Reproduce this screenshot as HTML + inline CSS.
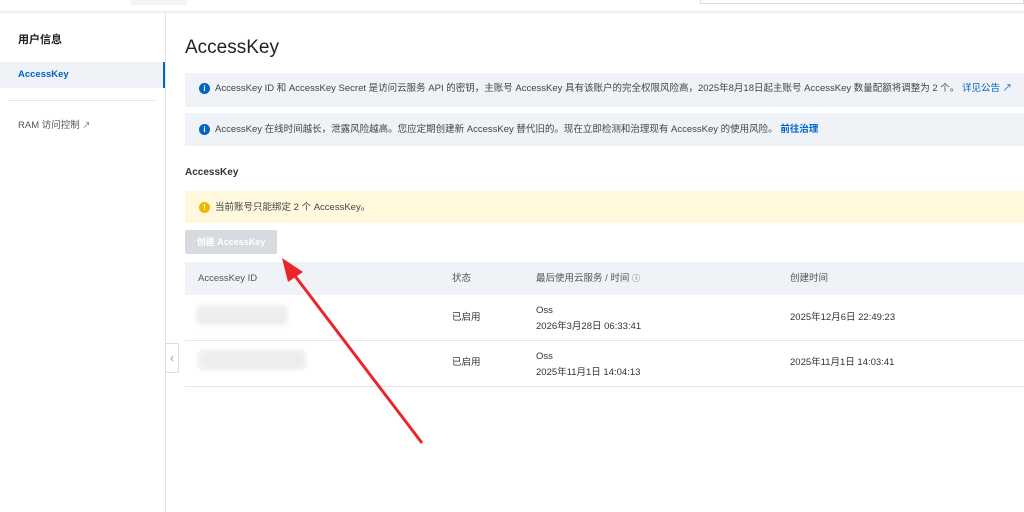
<!DOCTYPE html><html><head><meta charset="utf-8"><style>
*{margin:0;padding:0;box-sizing:border-box}
body{width:1024px;height:512px;overflow:hidden;background:#fff;font-family:"Liberation Sans","Noto Sans CJK SC",sans-serif;color:#333;position:relative}
.a{position:absolute}
.t{font-size:9.5px;white-space:nowrap;line-height:12px}
.ic{display:inline-block;width:11px;height:11px;border-radius:50%;background:#0064c8;color:#fff;font-size:8px;text-align:center;line-height:11px;font-weight:bold;vertical-align:top;margin-right:5px}
</style></head><body>
<div class="a" style="left:0;top:0;width:1024px;height:11px;background:#fff;box-shadow:0 1px 3px rgba(0,0,0,.12)"></div>
<div class="a" style="left:131px;top:0;width:56px;height:5px;background:#f2f3f5"></div>
<div class="a" style="left:700px;top:0;width:324px;height:4px;border:1px solid #ddd;border-top:none"></div>
<div class="a" style="left:165px;top:12px;width:1px;height:500px;background:#e3e3e3"></div>
<div class="a t" style="left:18px;top:34px;font-size:11px;font-weight:bold;color:#222">用户信息</div>
<div class="a" style="left:0;top:62px;width:165px;height:26px;background:#eff2f6;border-right:2px solid #0064c8"></div>
<div class="a t" style="left:18px;top:69px;font-weight:bold;color:#0064c8">AccessKey</div>
<div class="a" style="left:8px;top:100px;width:147px;height:1px;background:#e5e5e5"></div>
<div class="a t" style="left:18px;top:120px;color:#555">RAM 访问控制 <span style="font-size:8px">↗</span></div>
<div class="a" style="left:165px;top:343px;width:14px;height:30px;border:1px solid #ddd;background:#fff;color:#999;font-size:12px;text-align:center;line-height:28px">‹</div>
<div class="a" style="left:185px;top:36px;font-size:19px;line-height:24px;color:#222">AccessKey</div>
<div class="a" style="left:185px;top:73px;width:839px;height:34px;background:#eff2f6"></div>
<div class="a t" style="left:199px;top:83px;color:#444"><span class="ic">i</span>AccessKey ID 和 AccessKey Secret 是访问云服务 API 的密钥，主账号 AccessKey 具有该账户的完全权限风险高，2025年8月18日起主账号 AccessKey 数量配额将调整为 2 个。 <span style="color:#0064c8">详见公告 ↗</span></div>
<div class="a" style="left:185px;top:113px;width:839px;height:33px;background:#eff2f6"></div>
<div class="a t" style="left:199px;top:124px;color:#444"><span class="ic">i</span>AccessKey 在线时间越长，泄露风险越高。您应定期创建新 AccessKey 替代旧的。现在立即检测和治理现有 AccessKey 的使用风险。 <b style="color:#0064c8">前往治理</b></div>
<div class="a t" style="left:185px;top:167px;font-size:10px;font-weight:bold;color:#333">AccessKey</div>
<div class="a" style="left:185px;top:191px;width:839px;height:32px;background:#fff8dc"></div>
<div class="a t" style="left:199px;top:202px;color:#444"><span class="ic" style="background:#f5b400">!</span>当前账号只能绑定 2 个 AccessKey。</div>
<div class="a" style="left:185px;top:230px;width:92px;height:24px;background:#d7dadf;border-radius:2px;color:#fff;font-size:9px;font-weight:bold;text-align:center;line-height:24px">创建 AccessKey</div>
<div class="a" style="left:185px;top:262px;width:839px;height:33px;background:#eff2f6"></div>
<div class="a t" style="left:198px;top:273px;color:#555">AccessKey ID</div>
<div class="a t" style="left:452px;top:273px;color:#555">状态</div>
<div class="a t" style="left:536px;top:273px;color:#555">最后使用云服务 / 时间 <span style="font-size:8px">ⓘ</span></div>
<div class="a t" style="left:790px;top:273px;color:#555">创建时间</div>
<div class="a" style="left:185px;top:340px;width:839px;height:1px;background:#e5e5e5"></div>
<div class="a" style="left:185px;top:386px;width:839px;height:1px;background:#e5e5e5"></div>
<div class="a" style="left:196px;top:305px;width:92px;height:20px;background:#eceef0;border-radius:6px;filter:blur(2px)"></div>
<div class="a" style="left:198px;top:350px;width:108px;height:20px;background:#eceef0;border-radius:6px;filter:blur(2px)"></div>
<div class="a t" style="left:452px;top:312px">已启用</div>
<div class="a t" style="left:452px;top:357px">已启用</div>
<div class="a t" style="left:536px;top:303px;line-height:16px">Oss<br>2026年3月28日 06:33:41</div>
<div class="a t" style="left:536px;top:349px;line-height:16px">Oss<br>2025年11月1日 14:04:13</div>
<div class="a t" style="left:790px;top:312px">2025年12月6日 22:49:23</div>
<div class="a t" style="left:790px;top:357px">2025年11月1日 14:03:41</div>
<svg class="a" style="left:0;top:0" width="1024" height="512"><line x1="422" y1="443" x2="292" y2="272" stroke="#e8262b" stroke-width="3"/><polygon points="282,258 303,272 288,282" fill="#e8262b"/></svg>
</body></html>
